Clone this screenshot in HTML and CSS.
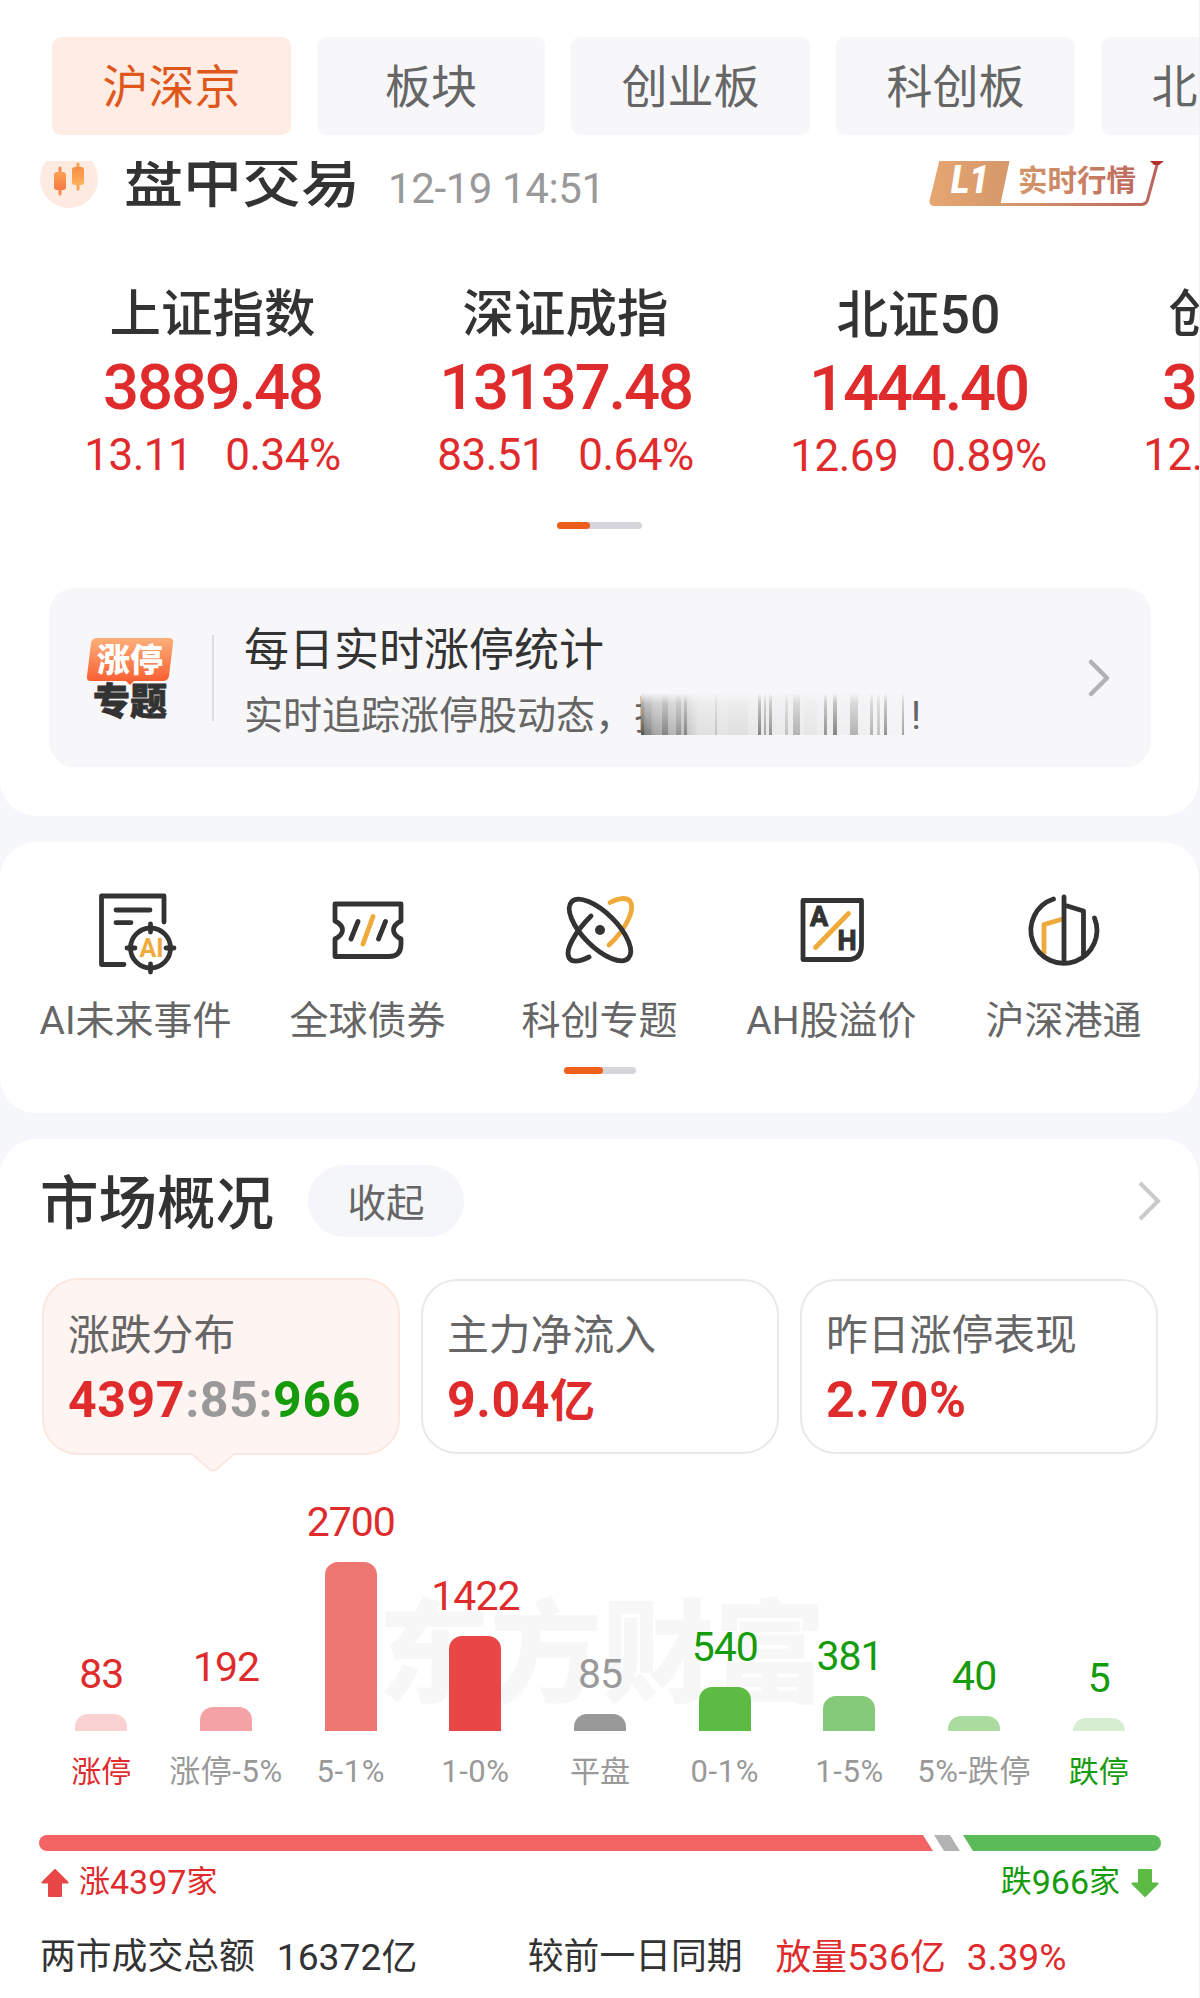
FILE: index.html
```html
<!DOCTYPE html>
<html lang="zh-CN">
<head>
    <meta charset="UTF-8">
    <meta name="viewport" content="width=device-width, initial-scale=1.0">
    <title>沪深京行情</title>
    <link rel="stylesheet" href="styles.css">
</head>
<body>
    <section class="panel panel-top">
        <nav class="tabs">
            <a class="tab active">沪深京</a>
            <a class="tab tab-short">板块</a>
            <a class="tab">创业板</a>
            <a class="tab">科创板</a>
            <a class="tab">北交所</a>
        </nav>

        <header class="session">
            <div class="session-row">
                <svg class="session-icon" width="58" height="58" viewBox="0 0 58 58">
                    <defs>
                        <linearGradient id="candle1" x1="0" y1="0" x2="0" y2="1">
                            <stop offset="0" stop-color="#fba254"/>
                            <stop offset="1" stop-color="#f57843"/>
                        </linearGradient>
                        <linearGradient id="candle2" x1="0" y1="0" x2="0" y2="1">
                            <stop offset="0" stop-color="#f98d42"/>
                            <stop offset="1" stop-color="#fdb15b"/>
                        </linearGradient>
                    </defs>
                    <circle cx="29" cy="29" r="29" fill="#fdebe1"/>
                    <path d="M20 18v26" stroke="#f88c4b" stroke-width="3" stroke-linecap="round"/>
                    <rect x="14" y="22" width="12" height="18" rx="3" fill="url(#candle1)"/>
                    <path d="M38 14v25" stroke="#fba254" stroke-width="3" stroke-linecap="round"/>
                    <rect x="32" y="17" width="12" height="18" rx="3" fill="url(#candle2)"/>
                </svg>
                <h1>盘中交易</h1>
                <time>12-19 14:51</time>
                <svg class="level-badge" width="236" height="58" viewBox="0 0 236 58">
                    <defs>
                        <linearGradient id="gold" gradientUnits="userSpaceOnUse" x1="0" y1="0" x2="236" y2="0">
                            <stop offset="0" stop-color="#e5a671"/>
                            <stop offset="0.4" stop-color="#d39569"/>
                            <stop offset="1" stop-color="#b9605c"/>
                        </linearGradient>
                    </defs>
                    <path d="M12 4H82L71 56H6Q-1 56 1 49Z" fill="url(#gold)"/>
                    <path d="M70 54.500H212Q217 54.500 218.500 50L229 11" fill="none" stroke="url(#gold)" stroke-width="3"/>
                    <path d="M221 11h14l-5 4h-5z" fill="#b5302c"/>
                    <text class="badge-level" x="22" y="43" textLength="38" lengthAdjust="spacingAndGlyphs">L1</text>
                    <text class="badge-text" x="89" y="41" fill="url(#gold)">实时行情</text>
                </svg>
            </div>
        </header>

        <div class="indices">
            <div class="index">
                <h2>上证指数</h2>
                <p class="index-value">3889.48</p>
                <p class="index-change"><span>13.11</span><span>0.34%</span></p>
            </div>
            <div class="index">
                <h2>深证成指</h2>
                <p class="index-value">13137.48</p>
                <p class="index-change"><span>83.51</span><span>0.64%</span></p>
            </div>
            <div class="index">
                <h2>北证<span class="num">50</span></h2>
                <p class="index-value">1444.40</p>
                <p class="index-change"><span>12.69</span><span>0.89%</span></p>
            </div>
            <div class="index">
                <h2>创业板指</h2>
                <p class="index-value">3122.24</p>
                <p class="index-change"><span>12.20</span><span>0.40%</span></p>
            </div>
        </div>
        <div class="pager pager-indices"><i></i></div>

        <a class="promo">
            <svg class="promo-icon" width="90" height="84" viewBox="0 0 90 84">
                <defs>
                    <linearGradient id="flame" x1="0" y1="0" x2="0" y2="1">
                        <stop offset="0" stop-color="#fdb07a"/>
                        <stop offset="1" stop-color="#f9582c"/>
                    </linearGradient>
                </defs>
                <path d="M12 2H84Q89 2 88 7L84 40Q83 45 78 45H49L45 49L41 45H6Q1 45 2 40L6 7Q7 2 12 2Z" fill="url(#flame)"/>
                <text class="promo-icon-top" x="12" y="36">涨停</text>
                <text class="promo-icon-bottom" x="8" y="79">专题</text>
            </svg>
            <div class="promo-text">
                <h3>每日实时涨停统计</h3>
                <p>实时追踪涨停股动态，<span class="cut">把</span><svg class="smear" width="264" height="42" viewBox="0 0 264 42">
                    <defs>
                        <linearGradient id="fade" x1="0" y1="0" x2="0" y2="1">
                            <stop offset="0" stop-color="#fff" stop-opacity="0"/>
                            <stop offset="0.25" stop-color="#fff" stop-opacity="0.4"/>
                            <stop offset="1" stop-color="#fff" stop-opacity="0.9"/>
                        </linearGradient>
                        <linearGradient id="haze" x1="0" y1="0" x2="1" y2="0">
                            <stop offset="0" stop-color="#555"/>
                            <stop offset="0.05" stop-color="#999"/>
                            <stop offset="0.17" stop-color="#bbb"/>
                            <stop offset="0.22" stop-color="#ddd"/>
                            <stop offset="0.4" stop-color="#e5e5e7"/>
                            <stop offset="1" stop-color="#f3f3f5"/>
                        </linearGradient>
                        <mask id="smearMask"><rect width="264" height="42" fill="url(#fade)"/></mask>
                    </defs>
                    <g mask="url(#smearMask)">
                        <rect width="264" height="42" fill="url(#haze)"/>
                        <rect width="3" height="42" fill="#444"/>
                        <rect x="7" width="3" height="42" fill="#777"/>
                        <rect x="21" width="6" height="42" fill="#777"/>
                        <rect x="35" width="5" height="42" fill="#888"/>
                        <rect x="43" width="3" height="42" fill="#777"/>
                        <rect x="58" width="14" height="42" fill="#ddd"/>
                        <rect x="74" width="2" height="42" fill="#bbb"/>
                        <rect x="87" width="20" height="42" fill="#dcdcdc"/>
                        <rect x="117" width="3" height="42" fill="#777"/>
                        <rect x="123" width="2" height="42" fill="#999"/>
                        <rect x="128" width="3" height="42" fill="#888"/>
                        <rect x="144" width="3" height="42" fill="#bbb"/>
                        <rect x="152" width="7" height="42" fill="#aaa"/>
                        <rect x="163" width="13" height="42" fill="#e4e4e4"/>
                        <rect x="183" width="3" height="42" fill="#888"/>
                        <rect x="192" width="4" height="42" fill="#777"/>
                        <rect x="209" width="8" height="42" fill="#aaa"/>
                        <rect x="229" width="3" height="42" fill="#aaa"/>
                        <rect x="236" width="3" height="42" fill="#bbb"/>
                        <rect x="243" width="3" height="42" fill="#888"/>
                        <rect x="261" width="2" height="42" fill="#999"/>
                    </g>
                </svg>!</p>
            </div>
            <svg class="chevron" width="24" height="40" viewBox="0 0 24 40">
                <path d="M4 4L20 20L4 36" fill="none" stroke="#b2b2b4" stroke-width="4.500" stroke-linecap="round" stroke-linejoin="round"/>
            </svg>
        </a>
    </section>

    <section class="panel panel-tools">
        <div class="tools">
            <a class="tool">
                <svg width="90" height="90" viewBox="0 0 90 90">
                    <path d="M73 34V8H10.500V76.500H33M25 22H59M25 34.700H40"/>
                    <circle cx="59.500" cy="60" r="20"/>
                    <path d="M59.500 36v8M59.500 76v8M36 60h8M75 60h8"/>
                    <text class="icon-ai" x="60.500" y="69">AI</text>
                </svg>
                <span>AI未来事件</span>
            </a>
            <a class="tool">
                <svg width="90" height="90" viewBox="0 0 90 90">
                    <path d="M12 16H78V33C68 38 68 46 78 51V56Q78 68.500 66 68.500H12V51C22 46 22 38 12 33Z"/>
                    <path d="M35 33.500L28 51M62.500 33.500L55.500 51"/>
                    <path class="accent" d="M50 28.500L40 56"/>
                </svg>
                <span>全球债券</span>
            </a>
            <a class="tool">
                <svg width="90" height="90" viewBox="0 0 90 90">
                    <path class="accent" d="M55 14.500C63 10 71 9 75 13C81 22 70 42 54 57"/>
                    <ellipse cx="45" cy="42" rx="40" ry="17" transform="rotate(45 45 42)"/>
                    <path d="M36 28C20 44 9 63 14.500 70.500C18 75 26 73 34 69"/>
                    <circle class="dot" cx="45" cy="42" r="5"/>
                </svg>
                <span>科创专题</span>
            </a>
            <a class="tool">
                <svg width="90" height="90" viewBox="0 0 90 90">
                    <path d="M16 12.500H74.500V57Q74.500 71.500 61 71.500H16Z"/>
                    <path class="accent" d="M28.500 59.500L61.500 25.500"/>
                    <text class="icon-ah" x="32" y="38">A</text>
                    <text class="icon-ah" x="60" y="62">H</text>
                </svg>
                <span>AH股溢价</span>
            </a>
            <a class="tool">
                <svg width="90" height="90" viewBox="0 0 90 90">
                    <path class="accent" d="M42 31.500L25 36.500V65"/>
                    <path d="M34.500 11A33 33 0 1 0 75.500 30"/>
                    <path d="M45 9V74M45 17L64.500 23V67"/>
                </svg>
                <span>沪深港通</span>
            </a>
        </div>
        <div class="pager pager-tools"><i></i></div>
    </section>

    <section class="panel panel-market">
        <header class="market-head">
            <h1>市场概况</h1>
            <button class="collapse">收起</button>
            <svg class="chevron" width="24" height="40" viewBox="0 0 24 40">
                <path d="M2 2L20 20L2 38" fill="none" stroke="#c9c9c9" stroke-width="4"/>
            </svg>
        </header>

        <div class="stats">
            <div class="stat selected">
                <h4>涨跌分布</h4>
                <p><b class="up">4397</b><b class="flat">:85:</b><b class="down">966</b></p>
                <svg class="pointer" width="42" height="19" viewBox="0 0 42 19">
                    <path d="M0 0H42L25 15.500Q21 19 17 15.500L0 0Z" fill="#fef4f1"/>
                    <path d="M0 1L17 16Q21 19 25 16L42 1" fill="none" stroke="#fbe7df" stroke-width="2"/>
                </svg>
            </div>
            <div class="stat">
                <h4>主力净流入</h4>
                <p><b class="up">9.04<span class="unit">亿</span></b></p>
            </div>
            <div class="stat">
                <h4>昨日涨停表现</h4>
                <p><b class="up">2.70%</b></p>
            </div>
        </div>

        <div class="chart">
            <div class="watermark">东方财富</div>
            <div class="column up"><b>83</b><i class="c1" style="height: 17px"></i><span>涨停</span></div>
            <div class="column up muted"><b>192</b><i class="c2" style="height: 24px"></i><span>涨停-5%</span></div>
            <div class="column up muted"><b>2700</b><i class="c3" style="height: 169px"></i><span>5-1%</span></div>
            <div class="column up muted"><b>1422</b><i class="c4" style="height: 95px"></i><span>1-0%</span></div>
            <div class="column flat"><b>85</b><i class="c5" style="height: 17px"></i><span>平盘</span></div>
            <div class="column down muted"><b>540</b><i class="c6" style="height: 44px"></i><span>0-1%</span></div>
            <div class="column down muted"><b>381</b><i class="c7" style="height: 35px"></i><span>1-5%</span></div>
            <div class="column down muted"><b>40</b><i class="c8" style="height: 15px"></i><span>5%-跌停</span></div>
            <div class="column down"><b>5</b><i class="c9" style="height: 13px"></i><span>跌停</span></div>
        </div>

        <div class="ratio">
            <i class="ratio-up" style="width: 894px"></i>
            <i class="ratio-flat" style="width: 26px"></i>
            <i class="ratio-down"></i>
        </div>
        <div class="ratio-text">
            <span class="up">
                <svg width="30" height="30" viewBox="0 0 30 30"><path d="M15 2L27.500 14.500H21V28H9V14.500H2.500Z" fill="#e84647" stroke="#e84647" stroke-width="2" stroke-linejoin="round"/></svg>
                涨<em class="num">4397</em>家
            </span>
            <span class="down">
                跌<em class="num">966</em>家
                <svg width="30" height="30" viewBox="0 0 30 30"><path d="M15 28L27.500 15.500H21V2H9V15.500H2.500Z" fill="#5bbb43" stroke="#5bbb43" stroke-width="2" stroke-linejoin="round"/></svg>
            </span>
        </div>

        <div class="turnover">
            <span>两市成交总额</span>
            <span class="total"><em class="num">16372</em>亿</span>
            <span class="compare">较前一日同期</span>
            <span class="up volume">放量<em class="num">536</em>亿</span>
            <span class="up"><em class="num">3.39%</em></span>
        </div>
    </section>
</body>
</html>
```
FILE: styles.css
```css
* {
    box-sizing: border-box;
    margin: 0;
    padding: 0;
}

body {
    font-family: Roboto, "Noto Sans CJK SC", sans-serif;
    background: #f6f7fa;
    color: #333;
    width: 1200px;
    height: 1998px;
    overflow: hidden;
}

h1, h2, h3, h4 {
    font-weight: 500;
}

em, i {
    font-style: normal;
}

.num {
    font-size: 1.04em;
}

.up {
    color: #e02b2d;
}

.down {
    color: #159b0b;
}

.flat {
    color: #999;
}

.panel {
    background: #fff;
    border-right: 1px solid #f1f1f4;
    border-radius: 36px;
    margin-bottom: 26px;
    overflow: hidden;
}

.panel-top {
    height: 816px;
    padding-top: 37px;
    border-radius: 0 0 36px 36px;
}

/* Tabs */
.tabs {
    display: flex;
    gap: 26px;
    padding-left: 52px;
    margin-bottom: 26px;
}

.tab {
    flex: none;
    width: 239px;
    height: 98px;
    border-radius: 9px;
    background: #f7f7f9;
    color: #666;
    font-size: 46px;
    line-height: 101px;
    text-align: center;
}

.tab-short {
    width: 228px;
}

.tab.active {
    background: #ffece4;
    color: #e0571b;
}

/* Trading session */
.session {
    height: 60px;
    overflow: hidden;
}

.session-row {
    display: flex;
    align-items: center;
    height: 60px;
    margin-top: -12px;
    padding-left: 40px;
}

.session h1 {
    margin-left: 26px;
    padding-top: 6px;
    font-size: 59px;
    line-height: 60px;
}

.session time {
    margin-left: 28px;
    padding-top: 19px;
    color: #999;
    font-size: 42px;
    line-height: 60px;
    letter-spacing: -0.4px;
}

.level-badge {
    margin-left: auto;
    margin-right: 34px;
}

.badge-level {
    fill: #fff;
    font-size: 38px;
    font-weight: 900;
    font-style: italic;
}

.badge-text {
    font-size: 29.5px;
    font-weight: 700;
}

/* Indices */
.indices {
    display: flex;
    margin-top: 64px;
    padding-left: 36px;
}

.index {
    flex: none;
    width: 353px;
    text-align: center;
    color: #e02b2d;
    white-space: nowrap;
}

.index h2 {
    color: #333;
    font-size: 51.5px;
    line-height: 60px;
}

.index-value {
    margin-top: 13px;
    font-size: 63.5px;
    font-weight: 500;
    line-height: 60px;
    letter-spacing: -2.2px;
}

.index-change {
    display: flex;
    justify-content: center;
    gap: 33px;
    margin-top: 12px;
    font-size: 44px;
    line-height: 50px;
    letter-spacing: -0.5px;
}

.pager {
    height: 7px;
    margin: 0 auto;
    border-radius: 4px;
    background: #d5d5db;
}

.pager i {
    display: block;
    height: 7px;
    border-radius: 4px;
    background: #ee5f1c;
}

.pager-indices {
    width: 85px;
    margin-top: 41px;
}

.pager-indices i {
    width: 33px;
}

/* Promo */
.promo {
    display: flex;
    align-items: center;
    height: 179px;
    margin: 59px 48px 0 49px;
    padding: 0 40px 0 36px;
    border-radius: 25px;
    background: #f7f7f9;
}

.promo-icon-top {
    fill: #fff;
    font-size: 33px;
    font-weight: 900;
}

.promo-icon-bottom {
    fill: #333;
    stroke: #333;
    stroke-width: 0.8px;
    font-size: 37px;
    font-weight: 900;
}

.promo-text {
    flex: 1;
    display: flex;
    flex-direction: column;
    justify-content: center;
    height: 86px;
    margin-left: 37px;
    padding-left: 30px;
    border-left: 2px solid #dddddf;
    white-space: nowrap;
}

.promo-text h3 {
    margin-top: 7px;
    font-size: 45px;
    font-weight: 400;
    line-height: 60px;
}

.promo-text p {
    display: flex;
    align-items: center;
    color: #666;
    font-size: 39px;
    line-height: 50px;
    margin-top: 10px;
}

.cut {
    width: 7px;
    overflow: hidden;
}

.smear {
    margin-right: 6px;
    margin-bottom: 5px;
}

/* Tools */
.panel-tools {
    height: 271px;
    padding-top: 46px;
}

.tools {
    display: grid;
    grid-template-columns: repeat(5, 232px);
    justify-content: center;
}

.tool {
    display: flex;
    flex-direction: column;
    align-items: center;
    color: #666;
    font-size: 39px;
    line-height: 44px;
}

.tool svg {
    margin-bottom: 21px;
    fill: none;
    stroke: #333;
    stroke-width: 4.8px;
    stroke-linecap: round;
    stroke-linejoin: round;
}

.tool .accent {
    stroke: #f0a93b;
}

.tool .dot {
    fill: #333;
    stroke: none;
}

.icon-ai, .icon-ah {
    font-size: 25px;
    font-weight: 700;
    text-anchor: middle;
    stroke: none;
    fill: #f0a93b;
}

.icon-ah {
    fill: #333;
    stroke: #333;
    stroke-width: 1px;
    font-size: 27px;
}

.pager-tools {
    width: 72px;
    margin-top: 24px;
}

.pager-tools i {
    width: 39px;
}

/* Market overview */
.panel-market {
    height: 900px;
    margin-bottom: 0;
    padding-top: 26px;
}

.market-head {
    display: flex;
    align-items: center;
    height: 72px;
    padding: 0 37px 0 40px;
}

.market-head h1 {
    padding-top: 6px;
    font-size: 58.5px;
    line-height: 66px;
}

.collapse {
    width: 156px;
    height: 72px;
    margin-left: 34px;
    padding-bottom: 3px;
    border: none;
    border-radius: 36px;
    background: #f5f6f9;
    color: #666;
    font-family: inherit;
    font-size: 38.5px;
}

.market-head .chevron {
    margin-left: auto;
}

.stats {
    display: grid;
    grid-template-columns: repeat(3, 1fr);
    gap: 21px;
    margin-top: 41px;
    padding: 0 41px 0 42px;
}

.stat {
    position: relative;
    height: 175px;
    margin-top: 1px;
    padding: 30px 0 0 24px;
    border: 2px solid #e9e9e9;
    border-radius: 36px;
}

.stat.selected {
    height: 177px;
    margin-top: 0;
    padding-top: 31px;
    border-color: #fbe7df;
    background: #fef4f1;
}

.stat h4 {
    color: #666;
    font-size: 41.8px;
    font-weight: 400;
    line-height: 50px;
}

.stat p {
    margin-top: 11px;
    font-size: 50px;
    line-height: 56px;
    letter-spacing: 0.6px;
}

.unit {
    font-size: 45px;
}

.pointer {
    position: absolute;
    left: 148px;
    top: 173px;
}

/* Distribution chart */
.chart {
    position: relative;
    display: grid;
    grid-template-columns: repeat(9, 124.7px);
    align-items: end;
    height: 297px;
    margin-top: 40px;
    padding-left: 39px;
}

.watermark {
    position: absolute;
    left: 378px;
    top: 96px;
    color: #f7f7f7;
    font-size: 112px;
    font-weight: 900;
    line-height: 130px;
}

.column {
    position: relative;
    display: flex;
    flex-direction: column;
    align-items: center;
    white-space: nowrap;
}

.column b {
    margin-bottom: 15px;
    font-size: 41px;
    font-weight: 400;
    line-height: 50px;
    letter-spacing: -1px;
}

.column i {
    width: 52px;
    border-radius: 13px 13px 0 0;
}

.column span {
    margin-top: 21px;
    font-size: 30px;
    line-height: 40px;
}

.column.muted span {
    color: #999;
    font-size: 31px;
    letter-spacing: 0.6px;
}

.c1 { background: #f9d1d2; }
.c2 { background: #f4a2a6; }
.c3 { background: #ee7772; }
.c4 { background: #e84647; }
.c5 { background: #999; }
.c6 { background: #5bbb43; }
.c7 { background: #84ca78; }
.c8 { background: #abdc9f; }
.c9 { background: #d6edd1; }

/* Up / down ratio */
.ratio {
    display: flex;
    gap: 1px;
    height: 16px;
    margin: 43px 38px 0 39px;
    border-radius: 8px;
    overflow: hidden;
}

.ratio-up {
    background: #f26564;
    clip-path: polygon(0 0, calc(100% - 10px) 0, 100% 100%, 0 100%);
}

.ratio-flat {
    background: #b3b3b3;
    clip-path: polygon(0 0, calc(100% - 10px) 0, 100% 100%, 10px 100%);
}

.ratio-down {
    flex: 1;
    margin-left: 2px;
    background: #5bbb58;
    clip-path: polygon(0 0, 100% 0, 100% 100%, 10px 100%);
}

.ratio-text {
    display: flex;
    justify-content: space-between;
    margin-top: 11px;
    padding: 0 39px 0 40px;
    font-size: 31px;
    line-height: 40px;
}

.ratio-text span {
    display: flex;
    align-items: center;
}

.ratio-text .num {
    font-size: 34px;
}

.ratio-text svg {
    margin-top: 2px;
}

.ratio-text .up svg {
    margin-right: 9px;
}

.ratio-text .down svg {
    margin-left: 10px;
}

.turnover {
    display: flex;
    margin-top: 30px;
    padding-left: 40px;
    font-size: 35.8px;
    line-height: 50px;
    white-space: nowrap;
}

.total {
    width: 249px;
    padding-left: 22px;
}

.compare {
    margin-left: 24px;
}

.volume {
    margin-left: 33px;
    margin-right: 21px;
}
```
